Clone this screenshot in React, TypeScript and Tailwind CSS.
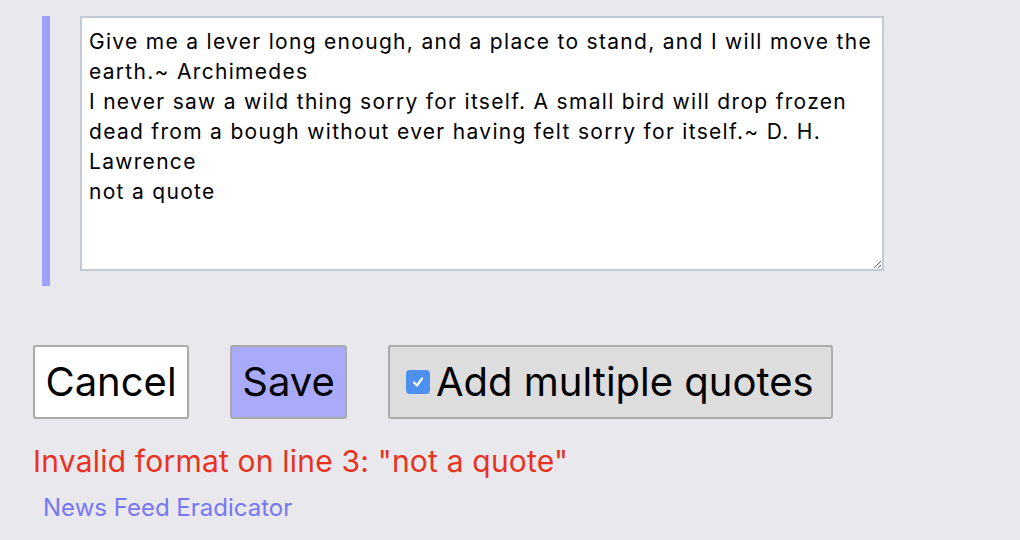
import React from 'react';

const quotes = `Give me a lever long enough, and a place to stand, and I will move the earth.~ Archimedes
I never saw a wild thing sorry for itself. A small bird will drop frozen dead from a bough without ever having felt sorry for itself.~ D. H. Lawrence
not a quote`;

const App = () => {
  return (
    <div className="w-[1020px] h-[540px] bg-[#e9e9ed] overflow-hidden font-['Inter','Liberation_Sans',Arial,sans-serif] text-black">
      <div className="pt-4 pl-[42px]">
        <div className="border-l-8 border-[#a0a0f8] pl-[30px] pb-[15px]">
          <textarea
            className="block w-[804px] h-[255px] bg-white border-2 border-[#c3cad7] px-[7px] py-[9px] text-[21px] leading-[30px] tracking-[1.3px] text-black outline-none resize-y font-['Inter','Liberation_Sans',sans-serif]"
            defaultValue={quotes}
          />
        </div>
      </div>

      <div className="flex items-center gap-[41px] pl-[33px] mt-[59px]">
        <button className="h-[74px] w-[156px] bg-white border-2 border-[#ababab] rounded-[3px] text-[40px]">
          Cancel
        </button>
        <button className="h-[74px] w-[117px] bg-[#aaaafb] border-2 border-[#ababab] rounded-[3px] text-[40px]">
          Save
        </button>
        <button className="h-[74px] w-[445px] bg-[#dddddd] border-2 border-[#ababab] rounded-[3px] text-[40px] flex items-center pl-[16px]">
          <span className="w-6 h-6 rounded-[4px] bg-[#4d90f0] flex items-center justify-center mr-[6px] shrink-0">
            <svg width="14" height="14" viewBox="0 0 14 14" fill="none">
              <path d="M3 7.5 L6 10.5 L11 3.5" stroke="white" strokeWidth="2.2" strokeLinecap="round" strokeLinejoin="round" />
            </svg>
          </span>
          Add multiple quotes
        </button>
      </div>

      <div className="pl-[33px] mt-[24px] text-[30px] leading-[36px] tracking-[0.2px] text-[#e8321f]">
        Invalid format on line 3: "not a quote"
      </div>

      <div className="pl-[43px] mt-[14px] text-[24px] leading-[30px] text-[#7777f2]">
        News Feed Eradicator
      </div>
    </div>
  );
};

export default App;
